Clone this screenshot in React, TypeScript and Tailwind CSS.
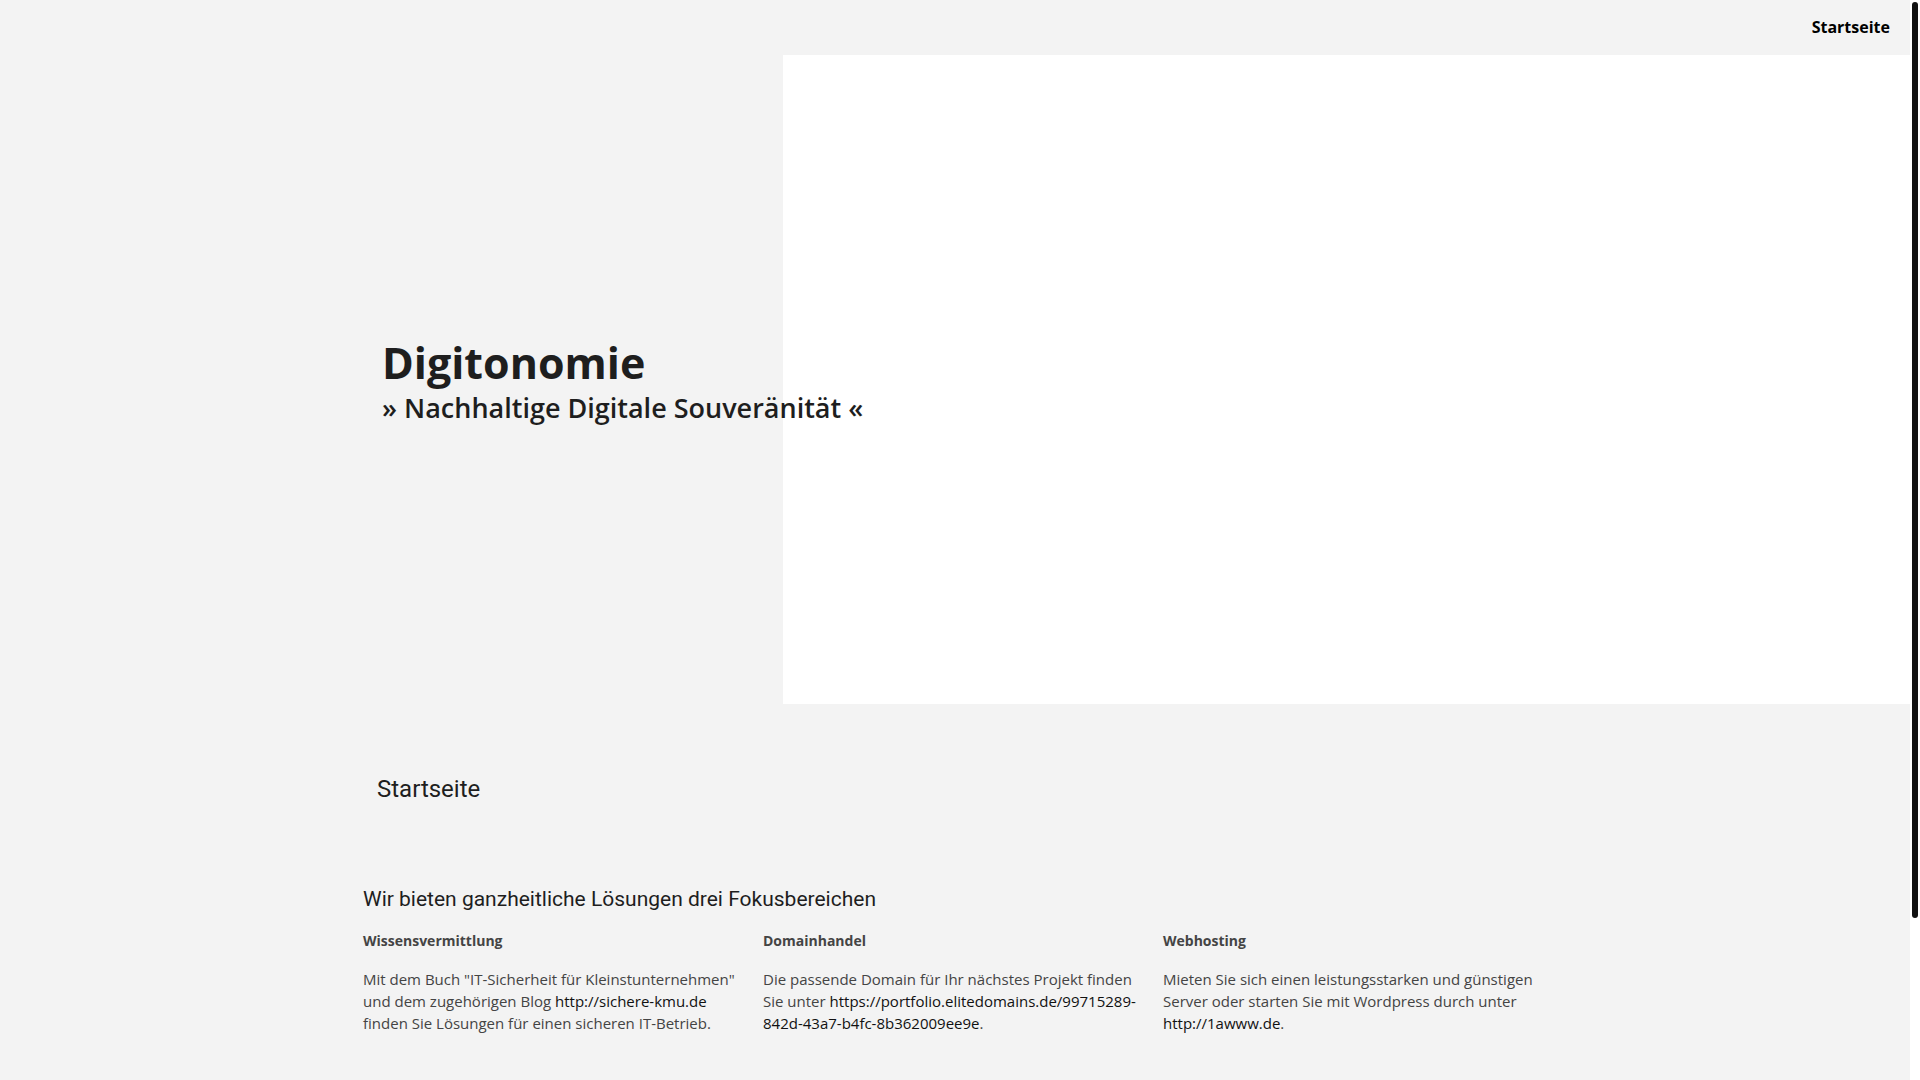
import React from "react";

interface Focus {
  title: string;
  text: string;
  link: string;
  after: string;
}

const focusAreas: Focus[] = [
  {
    title: "Wissensvermittlung",
    text: 'Mit dem Buch "IT-Sicherheit für Kleinstunternehmen" und dem zugehörigen Blog ',
    link: "http://sichere-kmu.de",
    after: " finden Sie Lösungen für einen sicheren IT-Betrieb.",
  },
  {
    title: "Domainhandel",
    text: "Die passende Domain für Ihr nächstes Projekt finden Sie unter ",
    link: "https://portfolio.elitedomains.de/99715289-842d-43a7-b4fc-8b362009ee9e",
    after: ".",
  },
  {
    title: "Webhosting",
    text: "Mieten Sie sich einen leistungsstarken und günstigen Server oder starten Sie mit Wordpress durch unter ",
    link: "http://1awww.de",
    after: ".",
  },
];

const FocusColumn: React.FC<{ item: Focus }> = ({ item }) => (
  <article className="pr-4 pl-2">
    <h3 className="text-[14px] font-bold">{item.title}</h3>
    <p className="mt-4">
      {item.text}
      <a href={item.link} className="text-[#111111]">
        {item.link}
      </a>
      {item.after}
    </p>
  </article>
);

const App: React.FC = () => {
  return (
    <div className="flex min-h-screen bg-white">
      <div className="min-w-0 flex-1 bg-[#f3f3f3] font-['Roboto',sans-serif] text-[#1e1e1e]">
        <header className="flex h-[55px] items-center justify-end px-5">
          <nav>
            <a href="#startseite" className="font-['Open_Sans',sans-serif] text-base font-bold text-black">
              Startseite
            </a>
          </nav>
        </header>

        <section className="relative flex min-h-[649px] items-center">
          <div className="absolute inset-y-0 right-0 w-[59%] bg-white" />
          <div className="relative mx-auto w-full max-w-[1200px] px-[27px] pt-2 font-['Open_Sans',sans-serif]">
            <h1 className="text-[43px] leading-[48px] font-bold">Digitonomie</h1>
            <p className="text-[27px] leading-[42px] font-semibold">» Nachhaltige Digitale Souveränität «</p>
          </div>
        </section>

        <main id="startseite" className="mx-auto w-full max-w-[1200px] pt-[69px]">
          <h2 className="px-[22px] text-2xl">Startseite</h2>
          <h2 className="mt-20 px-2 text-[21px] leading-7">
            Wir bieten ganzheitliche Lösungen drei Fokusbereichen
          </h2>
          <div className="mt-[17px] grid grid-cols-3 font-['Open_Sans',sans-serif] text-[15px] leading-[22px] text-[#444444]">
            {focusAreas.map((item) => (
              <FocusColumn key={item.title} item={item} />
            ))}
          </div>
        </main>
      </div>

      {/* scroll track */}
      <div className="w-[10px] shrink-0 p-[2px]">
        <div className="h-[916px] rounded-full bg-[#111111]" />
      </div>
    </div>
  );
};

export default App;
